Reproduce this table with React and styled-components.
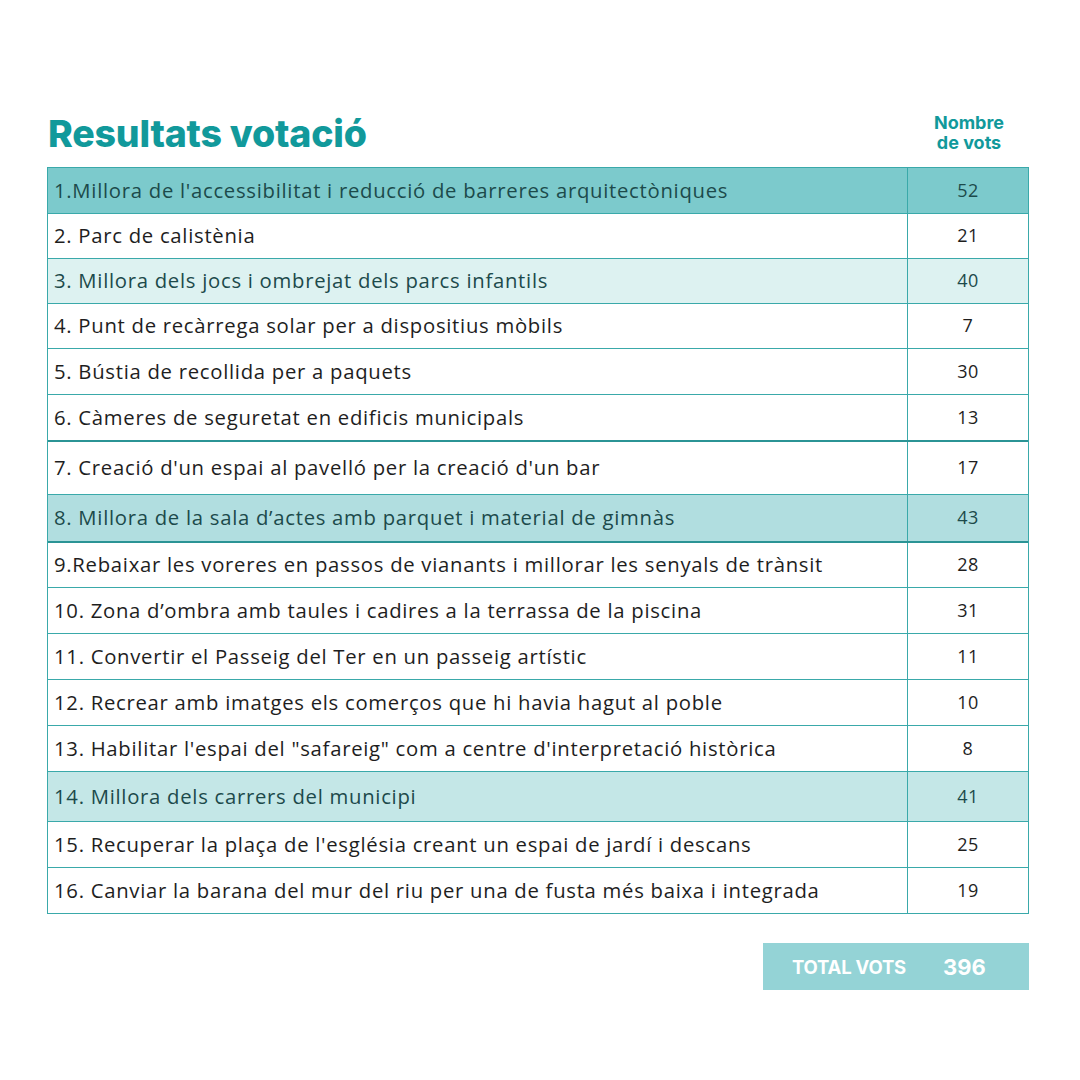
import React from 'react'
import styled, { createGlobalStyle } from 'styled-components'

const GlobalStyle = createGlobalStyle`
    html, body {
        margin: 0;
        padding: 0;
        background: #ffffff;
    }
`;

const Page = styled.div`
    width: 1080px;
    height: 1080px;
    box-sizing: border-box;
    padding: 108px 51px 0 47px;
    font-family: "Open Sans", "Liberation Sans", sans-serif;
`;
const Head = styled.div`
    display: flex;
    align-items: flex-end;
    justify-content: space-between;
    height: 59px;
`;
const Title = styled.h1`
    margin: 0 0 11px 1px;
    font-family: Inter, "Liberation Sans", sans-serif;
    font-weight: 800;
    font-size: 37.5px;
    line-height: 44px;
    letter-spacing: -0.2px;
    color: #11999b;
`;
const ColTitle = styled.div`
    width: 120px;
    margin-bottom: 14px;
    text-align: center;
    font-family: Inter, "Liberation Sans", sans-serif;
    font-weight: 700;
    font-size: 18px;
    line-height: 20px;
    color: #11999b;
`;
const Table = styled.div`
    border-left: 1px solid #3aa9aa;
    border-right: 1px solid #3aa9aa;
    border-bottom: 1px solid #3aa9aa;
`;
const Row = styled.div`
    display: grid;
    grid-template-columns: 860px 1fr;
    height: ${p => p.h}px;
    box-sizing: border-box;
    border-top: ${p => p.thick ? '2px solid #2b9495' : '1px solid #3aa9aa'};
    background: ${p => p.bg || '#ffffff'};
    color: ${p => p.bg ? '#1c4a4b' : '#1e1e1e'};
`;
const Label = styled.div`
    display: flex;
    align-items: center;
    padding: 0 0 2px 6px;
    font-size: 20.3px;
    letter-spacing: 0.72px;
    border-right: 1px solid #3aa9aa;
    white-space: nowrap;
`;
const Votes = styled.div`
    display: flex;
    align-items: center;
    justify-content: center;
    padding-bottom: 2px;
    font-size: 18px;
    letter-spacing: 0.5px;
`;
const Footer = styled.div`
    display: flex;
    justify-content: flex-end;
    margin-top: 29px;
`;
const Total = styled.div`
    display: flex;
    align-items: center;
    width: 266px;
    height: 47px;
    box-sizing: border-box;
    padding-left: 29px;
    background: #94d3d6;
    color: #ffffff;
    font-family: Inter, "Liberation Sans", sans-serif;
    font-weight: 700;
`;
const TotalLabel = styled.span`
    font-size: 18.5px;
    letter-spacing: -0.2px;
    margin-right: 37px;
`;
const TotalValue = styled.span`
    font-size: 22px;
`;

const rows = [
    { t: "1.Millora de l'accessibilitat i reducció de barreres arquitectòniques", v: 52, h: 46, bg: '#7ccacc' },
    { t: '2. Parc de calistènia', v: 21, h: 45 },
    { t: '3. Millora dels jocs i ombrejat dels parcs infantils', v: 40, h: 45, bg: '#ddf2f1' },
    { t: '4. Punt de recàrrega solar per a dispositius mòbils', v: 7, h: 45 },
    { t: '5. Bústia de recollida per a paquets', v: 30, h: 46 },
    { t: '6. Càmeres de seguretat en edificis municipals', v: 13, h: 46 },
    { t: "7. Creació d'un espai al pavelló per la creació d'un bar", v: 17, h: 54, thick: true },
    { t: '8. Millora de la sala d’actes amb parquet i material de gimnàs', v: 43, h: 47, bg: '#b1dee0' },
    { t: '9.Rebaixar les voreres en passos de vianants i millorar les senyals de trànsit', v: 28, h: 46, thick: true },
    { t: '10. Zona d’ombra amb taules i cadires a la terrassa de la piscina', v: 31, h: 46 },
    { t: '11. Convertir el Passeig del Ter en un passeig artístic', v: 11, h: 46 },
    { t: '12. Recrear amb imatges els comerços que hi havia hagut al poble', v: 10, h: 46 },
    { t: '13. Habilitar l\'espai del "safareig" com a centre d\'interpretació històrica', v: 8, h: 46 },
    { t: '14. Millora dels carrers del municipi', v: 41, h: 50, bg: '#c4e7e7' },
    { t: "15. Recuperar la plaça de l'església creant un espai de jardí i descans", v: 25, h: 46 },
    { t: '16. Canviar la barana del mur del riu per una de fusta més baixa i integrada', v: 19, h: 46 },
]

export default function App() {
    const total = rows.reduce((s, r) => s + r.v, 0)
    return (
        <>
            <GlobalStyle />
            <Page>
                <Head>
                    <Title>Resultats votació</Title>
                    <ColTitle>Nombre<br />de vots</ColTitle>
                </Head>
                <Table>
                    {rows.map((r, i) => (
                        <Row key={`row${i}`} h={r.h} bg={r.bg} thick={r.thick}>
                            <Label>{r.t}</Label>
                            <Votes>{r.v}</Votes>
                        </Row>
                    ))}
                </Table>
                <Footer>
                    <Total>
                        <TotalLabel>TOTAL VOTS</TotalLabel>
                        <TotalValue>{total}</TotalValue>
                    </Total>
                </Footer>
            </Page>
        </>
    )
}
